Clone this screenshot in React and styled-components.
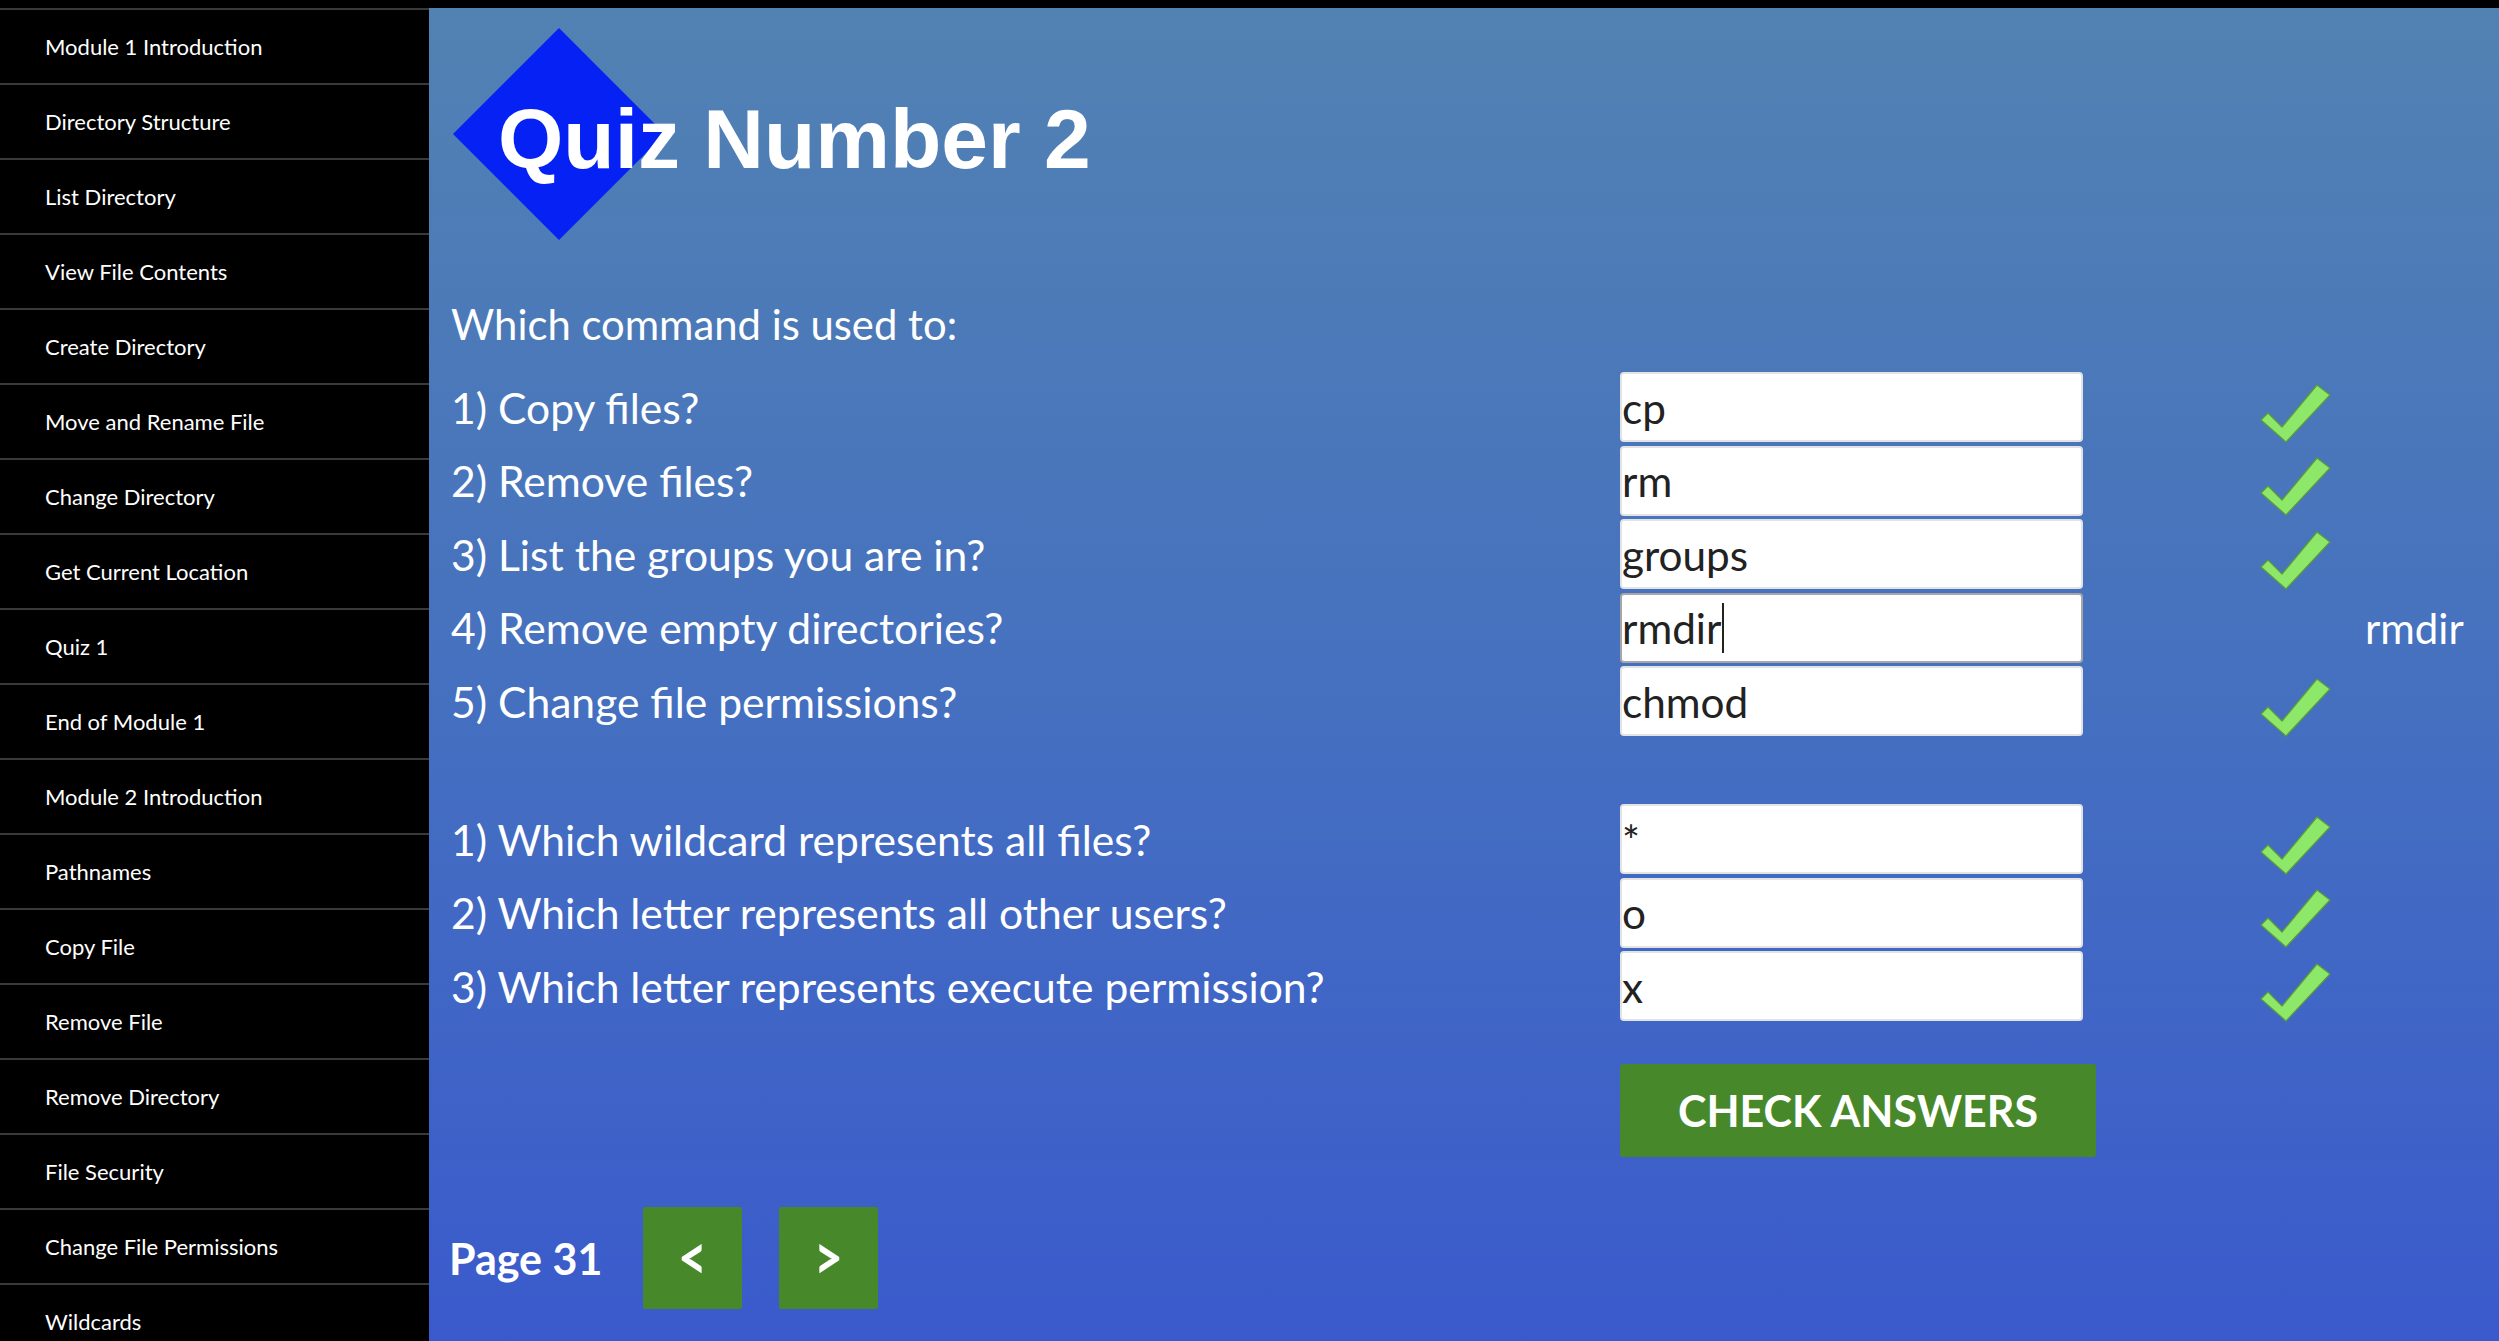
import React from 'react';
import styled, { createGlobalStyle } from 'styled-components';

const GlobalStyle = createGlobalStyle`
  html, body { margin: 0; padding: 0; height: 100%; background: #000; }
  body { font-family: Lato, "Open Sans", sans-serif; overflow: hidden; }
  #root { height: 100%; }
`;

const Page = styled.div`
  height: 100vh;
  display: flex;
  flex-direction: column;
  background: #000;
  overflow: hidden;
`;

const TopBar = styled.div`
  height: 8px;
  flex: none;
  background: #000;
`;

const Body = styled.div`
  flex: 1;
  display: flex;
  min-height: 0;
`;

const Sidebar = styled.nav`
  width: 429px;
  flex: none;
  background: #000;
  display: flex;
  flex-direction: column;
  overflow: hidden;
`;

const NavItem = styled.a`
  flex: none;
  box-sizing: content-box;
  height: 72px;
  border-top: 2px solid #3a3a3a;
  display: flex;
  align-items: center;
  padding-left: 45px;
  padding-bottom: 1px;
  color: #fff;
  font-family: Lato, sans-serif;
  font-size: 22px;
  text-decoration: none;
`;

const Main = styled.main`
  flex: 1;
  min-width: 0;
  background: linear-gradient(to bottom, #5182b2 0%, #4570c0 52%, #3a5acc 100%);
  padding: 20px 0 0 22px;
  display: flex;
  flex-direction: column;
  align-items: flex-start;
  color: #fff;
  font-family: Lato, sans-serif;
`;

const Logo = styled.div`
  position: relative;
  height: 212px;
  width: 700px;
  box-sizing: border-box;
  padding-top: 9px;
  display: flex;
  align-items: center;
`;

const Diamond = styled.svg`
  position: absolute;
  left: 2px;
  top: 0;
  width: 212px;
  height: 212px;
`;

const Title = styled.h1`
  position: relative;
  margin: 0 0 0 47px;
  font-family: "Liberation Sans", Arial, sans-serif;
  font-weight: 700;
  font-size: 84px;
  line-height: 84px;
  color: #fff;
  white-space: nowrap;
`;

const Prompt = styled.h2`
  margin: 59px 0 0;
  font-weight: 400;
  font-size: 41.8px;
  line-height: 50px;
  white-space: nowrap;
`;

const QuizGroup = styled.div`
  display: grid;
  grid-template-columns: 1169px 463px auto;
  grid-auto-rows: 70px;
  row-gap: 3.5px;
  margin-top: ${(p) => p.$top}px;
`;

const Question = styled.div`
  display: flex;
  align-items: center;
  font-size: 42.6px;
  white-space: nowrap;
`;

const AnswerField = styled.div`
  box-sizing: border-box;
  height: 70px;
  background: #fff;
  border: 2px solid ${(p) => (p.$focused ? '#a6a6a6' : '#e3e3e3')};
  border-radius: 4px;
  padding-left: 0;
  display: flex;
  align-items: center;
  font-size: 42.3px;
  color: #222;
  white-space: pre;
`;

const Caret = styled.span`
  display: inline-block;
  width: 2px;
  height: 50px;
  background: #222;
  margin-left: 1px;
`;

const Feedback = styled.div`
  display: flex;
  align-items: center;
  padding-left: ${(p) => (p.$text ? 282 : 177)}px;
  font-size: 42px;
  white-space: nowrap;
`;

const CheckMark = styled.svg`
  width: 72px;
  height: 61px;
  margin-top: 12px;
`;

const CheckButton = styled.button`
  margin: 43px 0 0 1169px;
  width: 476px;
  height: 93px;
  padding: 0;
  background: #47882a;
  border: none;
  border-radius: 3px;
  color: #fff;
  font-family: Lato, sans-serif;
  font-weight: 700;
  font-size: 43px;
  cursor: pointer;
`;

const NavRow = styled.div`
  display: flex;
  align-items: center;
  gap: 37px;
  margin-top: 50px;
`;

const PageLabel = styled.span`
  font-weight: 700;
  font-size: 43px;
  margin-left: -2px;
  margin-right: 4px;
  white-space: nowrap;
`;

const PageButton = styled.button`
  width: 99px;
  height: 102px;
  padding: 0;
  background: #47882a;
  border: none;
  border-radius: 2px;
  color: #fff;
  font-family: Lato, sans-serif;
  font-weight: 700;
  font-size: 64px;
  line-height: 1;
  cursor: pointer;
  display: flex;
  align-items: center;
  justify-content: center;
`;

const Arrow = styled.span`
  display: inline-block;
  transform: scaleX(0.78);
  margin-top: -4px;
`;

const navItems = [
  'Module 1 Introduction',
  'Directory Structure',
  'List Directory',
  'View File Contents',
  'Create Directory',
  'Move and Rename File',
  'Change Directory',
  'Get Current Location',
  'Quiz 1',
  'End of Module 1',
  'Module 2 Introduction',
  'Pathnames',
  'Copy File',
  'Remove File',
  'Remove Directory',
  'File Security',
  'Change File Permissions',
  'Wildcards',
];

const group1 = [
  { q: '1) Copy files?', a: 'cp', ok: true },
  { q: '2) Remove files?', a: 'rm', ok: true },
  { q: '3) List the groups you are in?', a: 'groups', ok: true },
  { q: '4) Remove empty directories?', a: 'rmdir', ok: false, focused: true, reveal: 'rmdir' },
  { q: '5) Change file permissions?', a: 'chmod', ok: true },
];

const group2 = [
  { q: '1) Which wildcard represents all files?', a: '*', ok: true },
  { q: '2) Which letter represents all other users?', a: 'o', ok: true },
  { q: '3) Which letter represents execute permission?', a: 'x', ok: true },
];

function Check() {
  return (
    <CheckMark viewBox="0 0 72 61">
      <polygon
        points="1,37 8,30 22,44 57,2 70,12 26,59"
        fill="#8de86a"
        stroke="#5d9a3c"
        strokeWidth="1.2"
        strokeLinejoin="round"
      />
    </CheckMark>
  );
}

function Group({ items, top }) {
  return (
    <QuizGroup $top={top}>
      {items.map((it) => (
        <React.Fragment key={it.q}>
          <Question>{it.q}</Question>
          <AnswerField role="textbox" $focused={it.focused}>
            {it.a}
            {it.focused && <Caret />}
          </AnswerField>
          <Feedback $text={!it.ok}>{it.ok ? <Check /> : it.reveal}</Feedback>
        </React.Fragment>
      ))}
    </QuizGroup>
  );
}

export default function App() {
  return (
    <Page>
      <GlobalStyle />
      <TopBar />
      <Body>
        <Sidebar>
          {navItems.map((n) => (
            <NavItem key={n} href="#">{n}</NavItem>
          ))}
        </Sidebar>
        <Main>
          <Logo>
            <Diamond viewBox="0 0 212 212">
              <polygon points="106,0 212,106 106,212 0,106" fill="#0521f4" />
            </Diamond>
            <Title>Quiz Number 2</Title>
          </Logo>
          <Prompt>Which command is used to:</Prompt>
          <Group items={group1} top={23} />
          <Group items={group2} top={68} />
          <CheckButton>CHECK ANSWERS</CheckButton>
          <NavRow>
            <PageLabel>Page 31</PageLabel>
            <PageButton aria-label="Previous page"><Arrow>&lt;</Arrow></PageButton>
            <PageButton aria-label="Next page"><Arrow>&gt;</Arrow></PageButton>
          </NavRow>
        </Main>
      </Body>
    </Page>
  );
}
